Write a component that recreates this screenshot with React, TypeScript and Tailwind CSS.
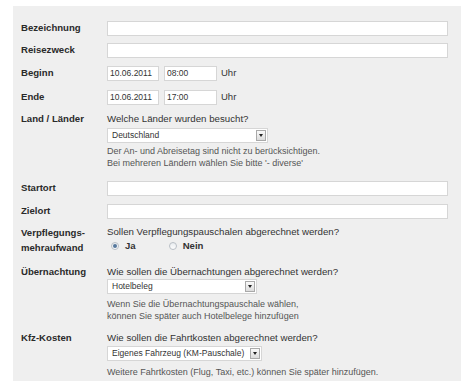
import React from "react";

const font = { fontFamily: '"Liberation Sans", Arial, sans-serif' };

const Label: React.FC<{ children: React.ReactNode; className?: string }> = ({ children, className }) => (
  <div className={"w-[86px] shrink-0 text-[9.6px] font-bold text-[#2a2a2a] " + (className ?? "")}>{children}</div>
);

const TextInput: React.FC<{ value?: string; className?: string }> = ({ value, className }) => (
  <input
    readOnly
    value={value ?? ""}
    className={"h-[15px] border border-[#d6d6d6] bg-white px-[2px] text-[8.5px] text-[#333] outline-none " + (className ?? "")}
  />
);

const Select: React.FC<{ value: string; width: string }> = ({ value, width }) => (
  <div className={"flex h-[15px] items-center justify-between border border-[#d6d6d6] bg-white pl-[4px] pr-[1px] " + width}>
    <span className="whitespace-nowrap text-[8.5px] leading-none text-[#333]">{value}</span>
    <span className="flex h-[11px] w-[10px] shrink-0 items-center justify-center border border-[#a9a9a9] bg-gradient-to-b from-[#fafafa] to-[#dcdcdc]">
      <span className="h-0 w-0 border-x-[2.5px] border-t-[3px] border-x-transparent border-t-[#222]" />
    </span>
  </div>
);

const Radio: React.FC<{ checked?: boolean }> = ({ checked }) => (
  <span className="flex h-[8px] w-[8px] items-center justify-center rounded-full border border-[#b9bfc6] bg-gradient-to-b from-[#e9ecef] to-[#fdfdfd]">
    {checked && <span className="h-[4px] w-[4px] rounded-full bg-[#56789c]" />}
  </span>
);

const Help: React.FC<{ children: React.ReactNode; className?: string }> = ({ children, className }) => (
  <div className={"text-[9px] leading-[12px] text-[#555] " + (className ?? "")}>{children}</div>
);

const Question: React.FC<{ children: React.ReactNode }> = ({ children }) => (
  <div className="text-[9.7px] leading-[14px] text-[#333]">{children}</div>
);

export default function App() {
  return (
    <div className="h-[382px] w-[470px] bg-white pt-[6px]" style={font}>
      <div className="ml-[13px] w-[448px] bg-[#efefef] pb-[3px] pl-[8px]">
        <div className="flex items-center pt-[14.5px]">
          <Label>Bezeichnung</Label>
          <TextInput className="w-[341px]" />
        </div>
        <div className="mt-[7px] flex items-center">
          <Label>Reisezweck</Label>
          <TextInput className="w-[341px]" />
        </div>
        <div className="mt-[8px] flex items-center">
          <Label>Beginn</Label>
          <TextInput value="10.06.2011" className="w-[52px]" />
          <TextInput value="08:00" className="ml-[5px] w-[53px]" />
          <span className="ml-[4px] text-[9.5px] text-[#333]">Uhr</span>
        </div>
        <div className="mt-[9px] flex items-center">
          <Label>Ende</Label>
          <TextInput value="10.06.2011" className="w-[52px]" />
          <TextInput value="17:00" className="ml-[5px] w-[53px]" />
          <span className="ml-[4px] text-[9.5px] text-[#333]">Uhr</span>
        </div>

        <div className="mt-[7px] flex">
          <Label className="leading-[14px]">Land / Länder</Label>
          <div>
            <Question>Welche Länder wurden besucht?</Question>
            <div className="mt-[2px]">
              <Select value="Deutschland" width="w-[161px]" />
            </div>
            <Help className="mt-[2px]">
              Der An- und Abreisetag sind nicht zu berücksichtigen.
              <br />
              Bei mehreren Ländern wählen Sie bitte '- diverse'
            </Help>
          </div>
        </div>

        <div className="mt-[12px] flex items-center">
          <Label>Startort</Label>
          <TextInput className="w-[341px]" />
        </div>
        <div className="mt-[8px] flex items-center">
          <Label>Zielort</Label>
          <TextInput className="w-[341px]" />
        </div>

        <div className="mt-[6px] flex">
          <Label className="leading-[15px]">
            Verpflegungs-
            <br />
            mehraufwand
          </Label>
          <div>
            <Question>Sollen Verpflegungspauschalen abgerechnet werden?</Question>
            <div className="flex h-[15px] items-center text-[9.6px] font-bold text-[#333]">
              <span className="ml-[4px]">
                <Radio checked />
              </span>
              <span className="ml-[6px]">Ja</span>
              <span className="ml-[33px]">
                <Radio />
              </span>
              <span className="ml-[6px]">Nein</span>
            </div>
          </div>
        </div>

        <div className="mt-[10px] flex">
          <Label className="leading-[14px]">Übernachtung</Label>
          <div>
            <Question>Wie sollen die Übernachtungen abgerechnet werden?</Question>
            <Select value="Hotelbeleg" width="w-[150px]" />
            <Help className="mt-[4px]">
              Wenn Sie die Übernachtungspauschale wählen,
              <br />
              können Sie später auch Hotelbelege hinzufügen
            </Help>
          </div>
        </div>

        <div className="mt-[9px] flex">
          <Label className="leading-[14px]">Kfz-Kosten</Label>
          <div>
            <Question>Wie sollen die Fahrtkosten abgerechnet werden?</Question>
            <div className="mt-[1px]">
              <Select value="Eigenes Fahrzeug (KM-Pauschale)" width="w-[155px]" />
            </div>
            <Help className="mt-[5px]">Weitere Fahrtkosten (Flug, Taxi, etc.) können Sie später hinzufügen.</Help>
          </div>
        </div>
      </div>
    </div>
  );
}
